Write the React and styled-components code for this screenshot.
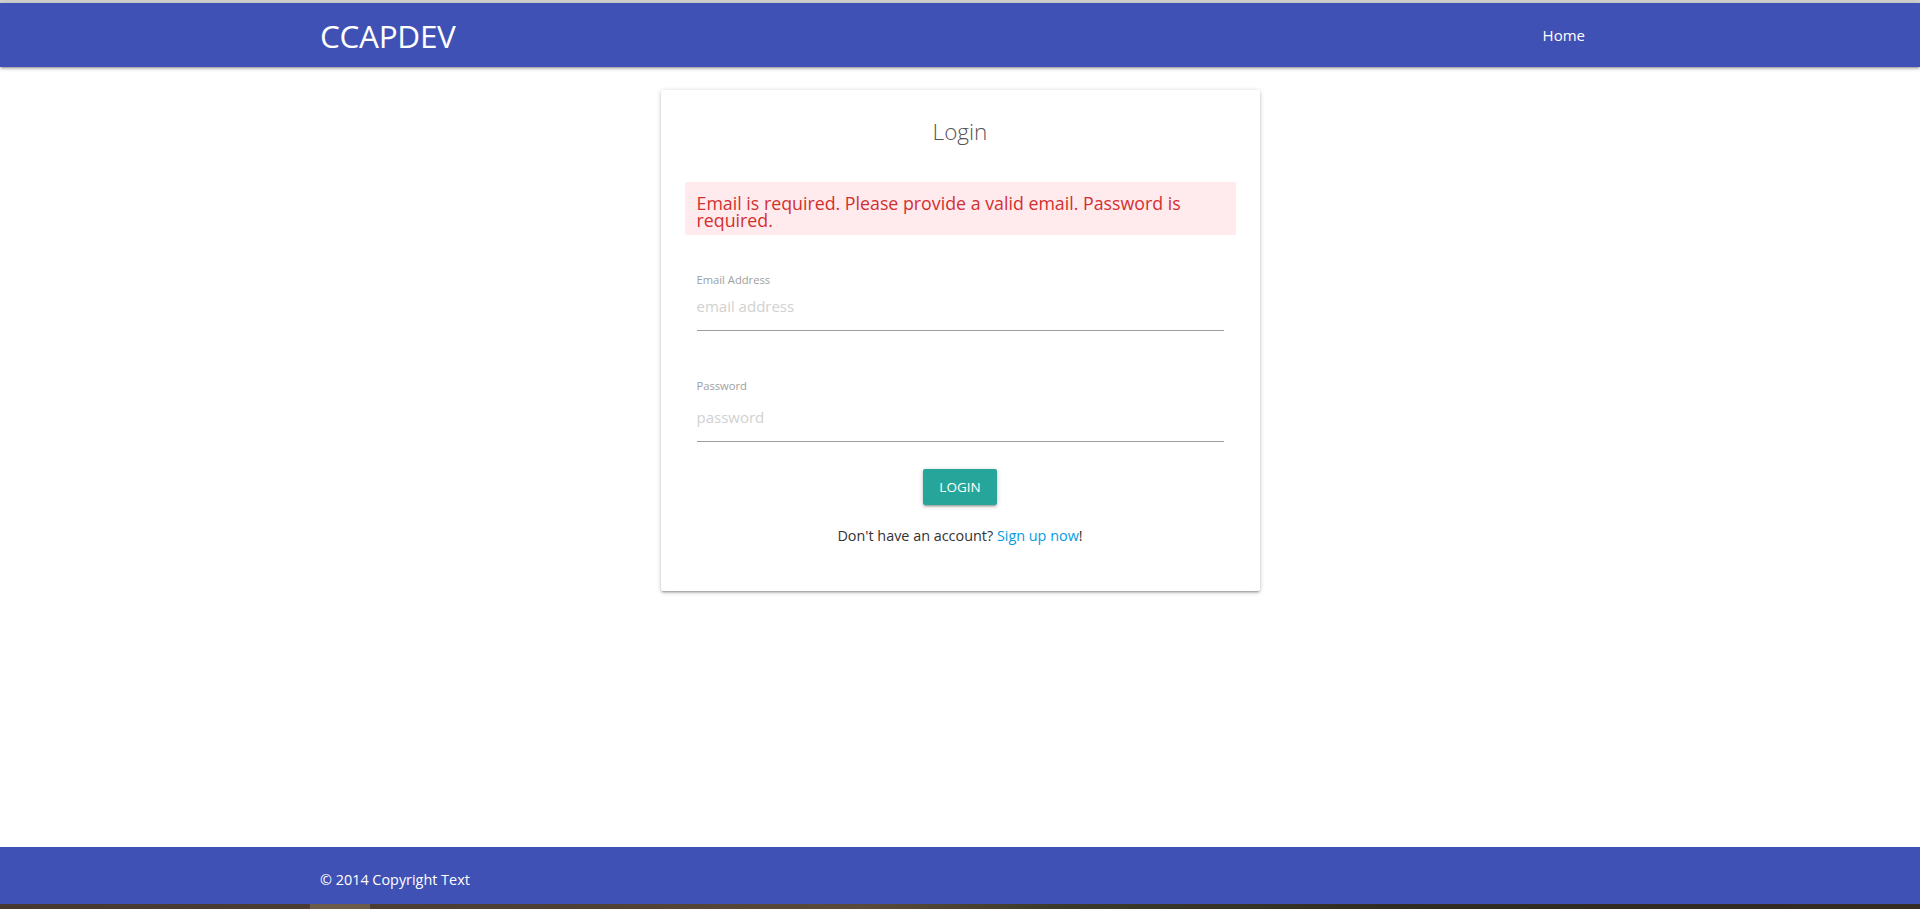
import React from "react";
import styled, { createGlobalStyle } from "styled-components";

const Global = createGlobalStyle`
  html, body { margin: 0; padding: 0; background: #fff; }
  body { font-family: "Open Sans", "Noto Sans", Arial, sans-serif; color: rgba(0,0,0,0.87); }
  * { box-sizing: border-box; }
`;

const Page = styled.div`
  min-height: 100vh;
  display: flex;
  flex-direction: column;
`;

const TopEdge = styled.div`
  height: 3px;
  background: #d2d2d2;
`;

const Nav = styled.nav`
  height: 64px;
  background: #3f51b5;
  color: #fff;
  position: relative;
  z-index: 2;
  box-shadow: 0 2px 2px 0 rgba(0,0,0,0.14), 0 3px 1px -2px rgba(0,0,0,0.12), 0 1px 5px 0 rgba(0,0,0,0.2);
`;

const Container = styled.div`
  width: 1280px;
  margin: 0 auto;
  height: 100%;
  display: flex;
  align-items: center;
  justify-content: ${(p) => p.$justify || "flex-start"};
`;

const Brand = styled.a`
  font-size: 31.5px;
  color: #fff;
  text-decoration: none;
  letter-spacing: -0.3px;
`;

const NavLinks = styled.ul`
  list-style: none;
  margin: 0;
  padding: 0;
  display: flex;
`;

const NavLink = styled.a`
  display: block;
  padding: 0 15px;
  color: #fff;
  font-size: 15px;
  text-decoration: none;
  line-height: 64px;
`;

const Main = styled.main`
  flex: 1;
  display: flex;
  justify-content: center;
  align-items: flex-start;
  padding-top: 23px;
`;

const Card = styled.div`
  width: 599px;
  background: #fff;
  border-radius: 2px;
  padding: 24px;
  box-shadow: 0 2px 2px 0 rgba(0,0,0,0.14), 0 3px 1px -2px rgba(0,0,0,0.12), 0 1px 5px 0 rgba(0,0,0,0.2);
  display: flex;
  flex-direction: column;
`;

const Title = styled.h4`
  margin: 2px 0 34px;
  font-size: 22.5px;
  line-height: 32px;
  font-weight: 300;
  text-align: center;
  color: #555;
`;

const Alert = styled.div`
  background: #ffebee;
  color: #d32f2f;
  font-size: 17.8px;
  line-height: 17.4px;
  padding: 13px 12px 5px;
  border-radius: 2px;
  font-weight: 500;
`;

const Field = styled.div`
  display: flex;
  flex-direction: column;
  padding: 0 12px;
  margin-top: ${(p) => p.$mt}px;
`;

const Label = styled.label`
  font-size: 11.2px;
  line-height: 16px;
  color: #9e9e9e;
`;

const Input = styled.input`
  height: ${(p) => p.$h}px;
  border: none;
  border-bottom: 1px solid #9e9e9e;
  outline: none;
  padding: 0 0 ${(p) => p.$pb || 0}px;
  font-family: inherit;
  font-size: 15px;
  color: rgba(0,0,0,0.87);
  background: transparent;
  &::placeholder { color: #d1d1d1; }
`;

const ButtonRow = styled.div`
  display: flex;
  justify-content: center;
  margin-top: 27px;
`;

const Button = styled.button`
  height: 36px;
  width: 74px;
  border: none;
  border-radius: 2px;
  background: #26a69a;
  color: #fff;
  font-family: inherit;
  font-size: 13.5px;
  text-transform: uppercase;
  padding: 0;
  box-shadow: 0 2px 2px 0 rgba(0,0,0,0.14), 0 3px 1px -2px rgba(0,0,0,0.12), 0 1px 5px 0 rgba(0,0,0,0.2);
  cursor: pointer;
`;

const SignupText = styled.p`
  margin: 21px 0 21px;
  text-align: center;
  font-size: 14.4px;
  line-height: 20px;
  color: #333;
`;

const Link = styled.a`
  color: #039be5;
  text-decoration: none;
`;

const Footer = styled.footer`
  height: 57px;
  background: #3f51b5;
  color: #fff;
  font-size: 14.4px;
`;

const FooterInner = styled(Container)`
  padding-top: 8px;
`;

const Strip = styled.div`
  height: 5px;
  display: flex;
  background: linear-gradient(90deg, #463830 0%, #4f4034 30%, #5a4a38 45%, #3b3a2a 55%, #2f2a22 75%, #342c25 100%);
`;

const StripBlock = styled.div`
  margin-left: 310px;
  width: 60px;
  background: #6b5b48;
`;

export default function App() {
  return (
    <Page>
      <Global />
      <TopEdge />
      <Nav>
        <Container $justify="space-between">
          <Brand href="#">CCAPDEV</Brand>
          <NavLinks>
            <li><NavLink href="#">Home</NavLink></li>
          </NavLinks>
        </Container>
      </Nav>
      <Main>
        <Card>
          <Title>Login</Title>
          <Alert>Email is required. Please provide a valid email. Password is required.</Alert>
          <Field $mt={37}>
            <Label>Email Address</Label>
            <Input $h={43} $pb={5} type="email" placeholder="email address" />
          </Field>
          <Field $mt={47}>
            <Label>Password</Label>
            <Input $h={48} type="password" placeholder="password" />
          </Field>
          <ButtonRow>
            <Button>Login</Button>
          </ButtonRow>
          <SignupText>
            Don't have an account? <Link href="#">Sign up now</Link>!
          </SignupText>
        </Card>
      </Main>
      <Footer>
        <FooterInner>© 2014 Copyright Text</FooterInner>
      </Footer>
      <Strip>
        <StripBlock />
      </Strip>
    </Page>
  );
}
